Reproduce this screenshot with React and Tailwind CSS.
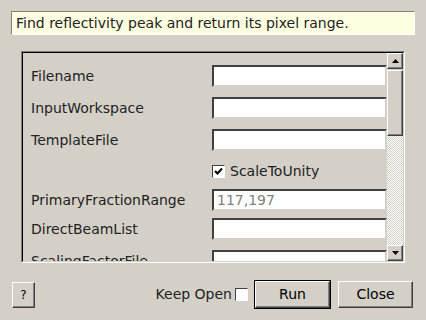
const raised =
  'border border-t-white border-l-white border-b-[#404040] border-r-[#404040] shadow-[inset_-1px_-1px_0_#808080]';

const Field = ({ value }) => (
  <div className="w-[190px] h-[22px] bg-white border-2 border-t-[#404040] border-l-[#404040] border-b-[#d4d0c8] border-r-[#d4d0c8] flex items-center pl-[3px] text-[#808080] leading-none">
    {value}
  </div>
);

const Row = ({ label, value, className }) => (
  <div className={`flex items-center h-[22px] ${className}`}>
    <div className="w-[181px] shrink-0 whitespace-nowrap">{label}</div>
    <Field value={value} />
  </div>
);

const Check = ({ checked }) => (
  <div className="w-[13px] h-[13px] shrink-0 bg-white border border-t-[#404040] border-l-[#404040] border-b-white border-r-white flex items-center justify-center">
    {checked && (
      <svg width="9" height="9" viewBox="0 0 9 9">
        <path d="M1 4 L3.5 6.5 L8 1.5" stroke="#000" strokeWidth="2" fill="none" />
      </svg>
    )}
  </div>
);

const Arrow = ({ up }) => (
  <div className={`h-[16px] bg-[#d4d0c8] flex items-center justify-center ${raised}`}>
    <svg width="7" height="4" viewBox="0 0 7 4">
      <path d={up ? 'M0 4 L3.5 0 L7 4 Z' : 'M0 0 L3.5 4 L7 0 Z'} fill="#000" />
    </svg>
  </div>
);

export default function App() {
  return (
    <div className="w-[426px] h-[320px] bg-[#d4d0c8] text-black text-[14px] font-['DejaVu_Sans',sans-serif] overflow-hidden">
      {/* description */}
      <div className="ml-[11px] mt-[11px] w-[404px] h-[24px] bg-[#ffffe1] border border-t-[#808080] border-l-[#808080] border-b-white border-r-white flex items-center pl-[4px] text-[#222] whitespace-nowrap">
        Find reflectivity peak and return its pixel range.
      </div>

      {/* property list */}
      <div className="ml-[21px] mt-[16px] w-[384px] h-[212px] border border-t-[#808080] border-l-[#808080] border-b-white border-r-white">
        <div className="h-full border border-t-black border-l-black border-b-[#d4d0c8] border-r-[#d4d0c8] flex">
          <div className="flex-1 overflow-hidden pl-[8px] text-[#222]">
            <Row label="Filename" className="mt-[12px]" />
            <Row label="InputWorkspace" className="mt-[10px]" />
            <Row label="TemplateFile" className="mt-[10px]" />
            <div className="flex items-center h-[22px] mt-[9px]">
              <div className="w-[181px] shrink-0" />
              <Check checked />
              <span className="ml-[5px]">ScaleToUnity</span>
            </div>
            <Row label="PrimaryFractionRange" value="117,197" className="mt-[7px]" />
            <Row label="DirectBeamList" className="mt-[7px]" />
            <Row label="ScalingFactorFile" className="mt-[10px]" />
          </div>
          <div className="w-[16px] flex flex-col">
            <Arrow up />
            <div className={`h-[66px] mt-px bg-[#d4d0c8] ${raised}`} />
            <div className="flex-1 bg-[repeating-conic-gradient(#d4d0c8_0_25%,#fff_0_50%)] bg-[length:2px_2px]" />
            <Arrow />
          </div>
        </div>
      </div>

      {/* buttons */}
      <div className="flex items-center mt-[17px] pl-[12px] pr-[13px]">
        <button className={`w-[23px] h-[26px] bg-[#d4d0c8] text-[12px] ${raised}`}>?</button>
        <div className="flex-1" />
        <span className="text-[#222] whitespace-nowrap">Keep Open</span>
        <div className="ml-[3px]">
          <Check />
        </div>
        <div className="ml-[6px] border border-black">
          <button className={`w-[75px] h-[27px] bg-[#d4d0c8] ${raised}`}>Run</button>
        </div>
        <button className={`ml-[7px] w-[75px] h-[27px] bg-[#d4d0c8] ${raised}`}>Close</button>
      </div>
    </div>
  );
}
